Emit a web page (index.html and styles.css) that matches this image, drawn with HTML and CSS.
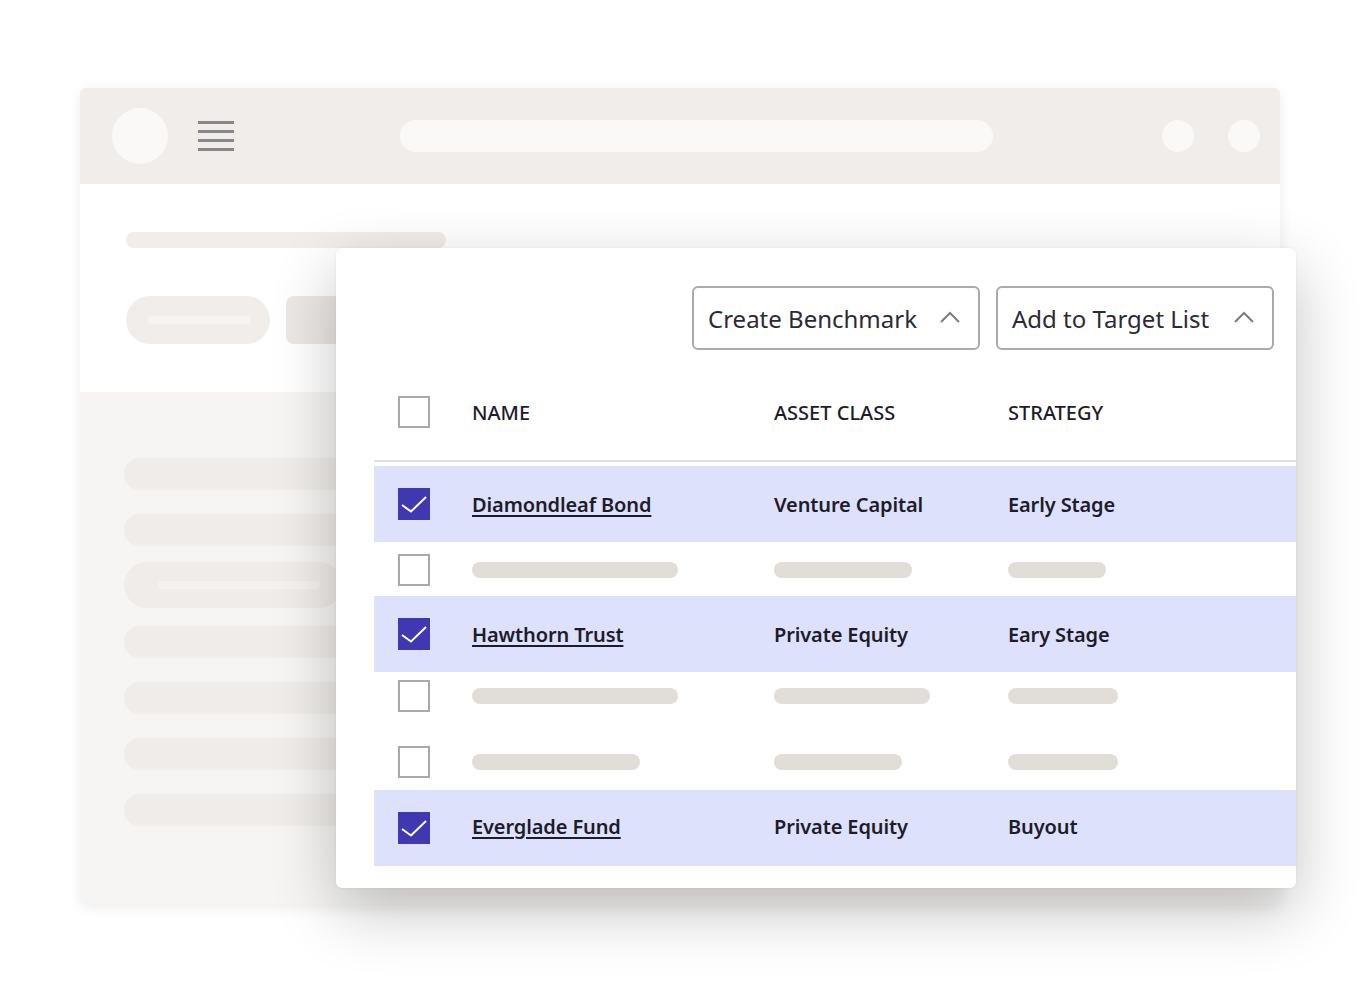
FILE: index.html
```html
<!DOCTYPE html>
<html lang="en">
<head>
<meta charset="utf-8">
<title>Target list</title>
<link rel="stylesheet" href="styles.css">
</head>
<body>
<div class="stage">
  <div class="window">
    <header class="win-header">
      <div class="logo"></div>
      <div class="burger"><span></span><span></span><span></span><span></span></div>
      <div class="search"></div>
      <div class="dots"><span class="dot"></span><span class="dot"></span></div>
    </header>
    <section class="win-top">
      <div class="sk-title"></div>
      <div class="sk-buttons">
        <div class="sk-pill"><span></span></div>
        <div class="sk-btn"></div>
      </div>
    </section>
    <section class="win-list">
      <div class="sk-row r1"></div>
      <div class="sk-row r2"></div>
      <div class="sk-row tall r3"><span></span></div>
      <div class="sk-row r4"></div>
      <div class="sk-row r5"></div>
      <div class="sk-row r6"></div>
      <div class="sk-row r7"></div>
    </section>

    <div class="popup">
      <div class="toolbar">
        <button class="dropdown dd-bench">Create Benchmark
          <svg class="chev" width="20" height="12" viewBox="0 0 20 12"><path d="M1 11 L10 2 L19 11" fill="none" stroke="#7d7b80" stroke-width="2"/></svg>
        </button>
        <button class="dropdown dd-target">Add to Target List
          <svg class="chev" width="20" height="12" viewBox="0 0 20 12"><path d="M1 11 L10 2 L19 11" fill="none" stroke="#7d7b80" stroke-width="2"/></svg>
        </button>
      </div>
      <div class="table">
        <div class="row head">
          <div class="cell"><span class="cb"></span></div>
          <div class="cell">NAME</div>
          <div class="cell">ASSET CLASS</div>
          <div class="cell">STRATEGY</div>
        </div>
        <div class="row sel">
          <div class="cell"><span class="cb on"><svg width="32" height="32" viewBox="0 0 32 32"><path d="M4 17 L13 23.5 L28 9" fill="none" stroke="#fff" stroke-width="2"/></svg></span></div>
          <div class="cell"><a class="link">Diamondleaf Bond</a></div>
          <div class="cell">Venture Capital</div>
          <div class="cell">Early Stage</div>
        </div>
        <div class="row blank b2">
          <div class="cell"><span class="cb"></span></div>
          <div class="cell"><span class="bar" style="width:206px"></span></div>
          <div class="cell"><span class="bar" style="width:138px"></span></div>
          <div class="cell"><span class="bar" style="width:98px"></span></div>
        </div>
        <div class="row sel">
          <div class="cell"><span class="cb on"><svg width="32" height="32" viewBox="0 0 32 32"><path d="M4 17 L13 23.5 L28 9" fill="none" stroke="#fff" stroke-width="2"/></svg></span></div>
          <div class="cell"><a class="link">Hawthorn Trust</a></div>
          <div class="cell">Private Equity</div>
          <div class="cell">Eary Stage</div>
        </div>
        <div class="row blank b4">
          <div class="cell"><span class="cb"></span></div>
          <div class="cell"><span class="bar" style="width:206px"></span></div>
          <div class="cell"><span class="bar" style="width:156px"></span></div>
          <div class="cell"><span class="bar" style="width:110px"></span></div>
        </div>
        <div class="row blank b5">
          <div class="cell"><span class="cb"></span></div>
          <div class="cell"><span class="bar" style="width:168px"></span></div>
          <div class="cell"><span class="bar" style="width:128px"></span></div>
          <div class="cell"><span class="bar" style="width:110px"></span></div>
        </div>
        <div class="row sel last">
          <div class="cell"><span class="cb on"><svg width="32" height="32" viewBox="0 0 32 32"><path d="M4 17 L13 23.5 L28 9" fill="none" stroke="#fff" stroke-width="2"/></svg></span></div>
          <div class="cell"><a class="link">Everglade Fund</a></div>
          <div class="cell">Private Equity</div>
          <div class="cell">Buyout</div>
        </div>
      </div>
    </div>
  </div>
</div>
</body>
</html>
```

FILE: styles.css
```css
* { box-sizing: border-box; }
html, body {
  margin: 0;
  padding: 0;
  background: #ffffff;
  font-family: "Noto Sans", "Open Sans", sans-serif;
}
.stage {
  width: 1360px;
  height: 992px;
  padding: 88px 0 0 80px;
}
.window {
  position: relative;
  width: 1200px;
  height: 816px;
  border-radius: 6px;
  overflow: visible;
  background: #f6f5f3;
  box-shadow: 0 3px 14px rgba(0, 0, 0, 0.08);
  display: flex;
  flex-direction: column;
}
.win-header {
  height: 96px;
  flex: none;
  background: #f0edea;
  border-radius: 6px 6px 0 0;
  display: flex;
  align-items: center;
  padding: 0 20px 0 32px;
}
.logo {
  width: 56px;
  height: 56px;
  border-radius: 50%;
  background: #faf9f8;
  flex: none;
}
.burger {
  margin-left: 30px;
  width: 36px;
  display: flex;
  flex-direction: column;
  gap: 6px;
  flex: none;
}
.burger span {
  display: block;
  height: 3px;
  background: #87868b;
}
.search {
  margin-left: 166px;
  width: 593px;
  height: 32px;
  border-radius: 16px;
  background: #faf9f8;
  flex: none;
}
.dots {
  margin-left: auto;
  display: flex;
  gap: 34px;
}
.dot {
  width: 32px;
  height: 32px;
  border-radius: 50%;
  background: #faf9f8;
}
.win-top {
  background: #ffffff;
  height: 208px;
  flex: none;
  padding: 48px 0 0 46px;
}
.sk-title {
  width: 320px;
  height: 16px;
  border-radius: 8px;
  background: #f0edea;
}
.sk-buttons {
  margin-top: 48px;
  display: flex;
  gap: 16px;
}
.sk-pill {
  width: 144px;
  height: 48px;
  border-radius: 24px;
  background: #f0edea;
  display: flex;
  align-items: center;
  padding-left: 22px;
}
.sk-pill span {
  display: block;
  width: 103px;
  height: 8px;
  border-radius: 4px;
  background: #f6f3f0;
}
.sk-btn {
  width: 160px;
  height: 48px;
  border-radius: 8px;
  background: #ebe8e5;
}
.win-list {
  flex: 1;
  padding: 66px 0 0 44px;
  border-radius: 0 0 6px 6px;
}
.sk-row {
  width: 300px;
  height: 32px;
  border-radius: 16px;
  background: #efece9;
  margin-top: 24px;
}
.sk-row.r1 { margin-top: 0; }
.sk-row.r3 { margin-top: 16px; }
.sk-row.r4 { margin-top: 18px; }
.sk-row.tall {
  width: 218px;
  height: 46px;
  border-radius: 23px;
  display: flex;
  align-items: center;
  padding-left: 34px;
}
.sk-row.tall span {
  display: block;
  width: 162px;
  height: 8px;
  border-radius: 4px;
  background: #f5f2ef;
}

/* popup */
.popup {
  position: absolute;
  left: 256px;
  top: 160px;
  width: 960px;
  height: 640px;
  background: #ffffff;
  border-radius: 6px;
  box-shadow: 0 22px 64px rgba(0, 0, 0, 0.24), 0 0 3px rgba(0, 0, 0, 0.06);
  padding: 38px 0 0 38px;
}
.toolbar {
  display: flex;
  justify-content: flex-end;
  gap: 16px;
  padding-right: 22px;
}
.dropdown {
  height: 64px;
  border: 2px solid #aca9a6;
  border-radius: 6px;
  background: #ffffff;
  font-family: "Noto Sans", "Open Sans", sans-serif;
  font-size: 24px;
  color: #2b2a36;
  display: flex;
  align-items: center;
  justify-content: space-between;
  padding: 0 18px 0 14px;
  margin: 0;
}
.dd-bench { width: 288px; }
.dd-target { width: 278px; }
.chev { flex: none; margin-top: -2px; }
.table {
  margin-top: 14px;
}
.row {
  display: grid;
  grid-template-columns: 74px 302px 234px 1fr;
  align-items: center;
  padding-left: 24px;
  font-size: 20px;
  font-weight: 600;
  letter-spacing: -0.12px;
  color: #1d1c29;
}
.cell { display: flex; align-items: center; }
.row.head {
  height: 98px;
  border-bottom: 2px solid #e2ded9;
  margin-bottom: 4px;
  font-size: 20px;
  font-weight: 500;
  letter-spacing: 0;
}
.row.sel {
  height: 76px;
  background: #dee1fc;
}
.row.sel.last { padding-bottom: 3px; }
.row.b2 { height: 54px; padding-top: 2px; }
.row.b4 { height: 48px; }
.row.b5 { height: 70px; padding-top: 14px; }
.cb {
  width: 32px;
  height: 32px;
  border: 2px solid #aca8a5;
  background: #fff;
  display: block;
  position: relative;
}
.cb.on {
  border: none;
  background: #3f38b1;
}
.row.sel.last .cb { margin-top: 3px; }
.cb svg { display: block; }
.link {
  color: #1d1c29;
  text-decoration: underline;
  text-decoration-thickness: 1.5px;
  text-underline-offset: 3px;
}
.bar {
  display: block;
  height: 16px;
  border-radius: 8px;
  background: #e1ddd7;
}
```
